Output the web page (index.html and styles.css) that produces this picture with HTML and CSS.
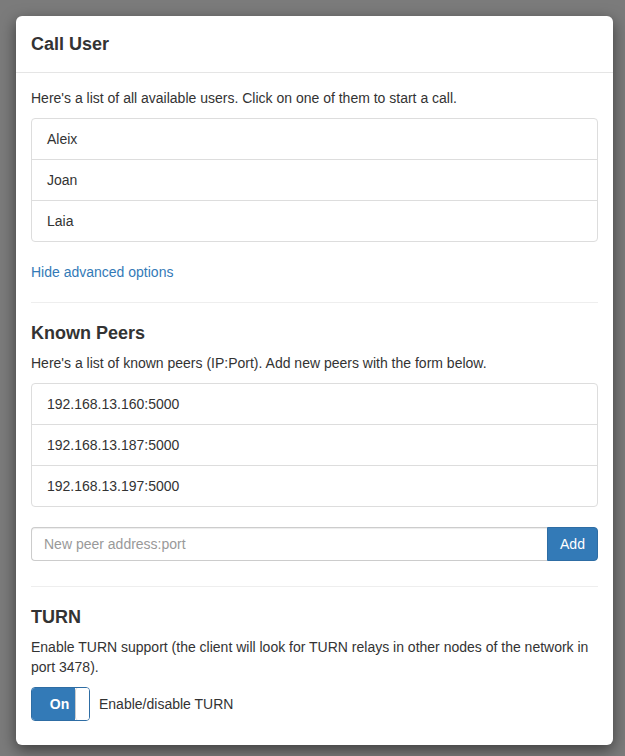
FILE: index.html
```html
<!DOCTYPE html>
<html lang="en">
<head>
<meta charset="utf-8">
<title>Call User</title>
<link rel="stylesheet" href="styles.css">
</head>
<body>
<div class="modal">
  <div class="modal-header">
    <h4 class="modal-title">Call User</h4>
  </div>
  <div class="modal-body">
    <p>Here's a list of all available users. Click on one of them to start a call.</p>
    <div class="list-group">
      <div class="list-item">Aleix</div>
      <div class="list-item">Joan</div>
      <div class="list-item">Laia</div>
    </div>
    <a class="link" href="#">Hide advanced options</a>
    <hr class="divider">
    <h4 class="section-title">Known Peers</h4>
    <p>Here's a list of known peers (IP:Port). Add new peers with the form below.</p>
    <div class="list-group">
      <div class="list-item">192.168.13.160:5000</div>
      <div class="list-item">192.168.13.187:5000</div>
      <div class="list-item">192.168.13.197:5000</div>
    </div>
    <div class="input-group">
      <input class="input" type="text" placeholder="New peer address:port">
      <button class="btn" type="button">Add</button>
    </div>
    <hr class="divider">
    <h4 class="section-title">TURN</h4>
    <p>Enable TURN support (the client will look for TURN relays in other nodes of the network in port 3478).</p>
    <div class="toggle-row">
      <div class="toggle">
        <span class="toggle-on">On</span>
        <span class="toggle-handle"></span>
      </div>
      <span class="toggle-label">Enable/disable TURN</span>
    </div>
  </div>
</div>
</body>
</html>
```
FILE: styles.css
```css
* { box-sizing: border-box; }
html, body {
  margin: 0;
  padding: 0;
}
body {
  background: #7b7b7b;
  font-family: "Liberation Sans", Arial, sans-serif;
  font-size: 14px;
  line-height: 20px;
  color: #333;
  padding: 16px 12px 12px 16px;
  height: 756px;
  overflow: hidden;
}
.modal {
  width: 597px;
  background: #fff;
  border-radius: 6px;
  box-shadow: 0 5px 15px rgba(0, 0, 0, 0.5);
}
.modal-header {
  padding: 15px;
  border-bottom: 1px solid #e5e5e5;
}
.modal-title {
  margin: 0;
  font-size: 18px;
  line-height: 26px;
  font-weight: bold;
  color: #333;
}
.modal-body {
  padding: 15px 15px 24px;
}
p {
  margin: 0 0 10px;
}
.list-group {
  margin: 0 0 20px;
  border: 1px solid #ddd;
  border-radius: 4px;
}
.list-item {
  padding: 10px 15px;
  border-top: 1px solid #ddd;
  line-height: 20px;
}
.list-item:first-child {
  border-top: none;
}
.link {
  display: block;
  color: #337ab7;
  text-decoration: none;
  line-height: 20px;
}
.divider {
  margin: 20px 0;
  border: 0;
  border-top: 1px solid #eee;
}
.input-group + .divider {
  margin-top: 25px;
}
.section-title {
  margin: 0 0 10px;
  font-size: 18px;
  line-height: 20px;
  font-weight: bold;
}
.input-group {
  display: flex;
  height: 34px;
}
.input {
  flex: 1;
  height: 34px;
  padding: 6px 12px;
  border: 1px solid #ccc;
  border-right: none;
  border-radius: 4px 0 0 4px;
  font-family: inherit;
  font-size: 14px;
  color: #555;
  box-shadow: inset 0 1px 1px rgba(0, 0, 0, 0.075);
  outline: none;
}
.input::placeholder {
  color: #999;
}
.btn {
  width: 51px;
  height: 34px;
  border: 1px solid #2e6da4;
  background: #337ab7;
  color: #fff;
  font-family: inherit;
  font-size: 14px;
  border-radius: 0 4px 4px 0;
  padding: 0;
}
.toggle-row {
  display: flex;
  align-items: center;
  gap: 9px;
}
.toggle {
  display: flex;
  width: 59px;
  height: 34px;
  border: 1px solid #2e6da4;
  border-radius: 4px;
  overflow: hidden;
}
.toggle-on {
  flex: 1;
  background: #337ab7;
  color: #fff;
  font-weight: bold;
  font-size: 14px;
  display: flex;
  align-items: center;
  justify-content: center;
  padding-left: 12px;
}
.toggle-handle {
  width: 14px;
  background: #fff;
  border-left: 1px solid #ccc;
  border-radius: 3px 0 0 3px;
}
.toggle-label {
  color: #333;
}
```
